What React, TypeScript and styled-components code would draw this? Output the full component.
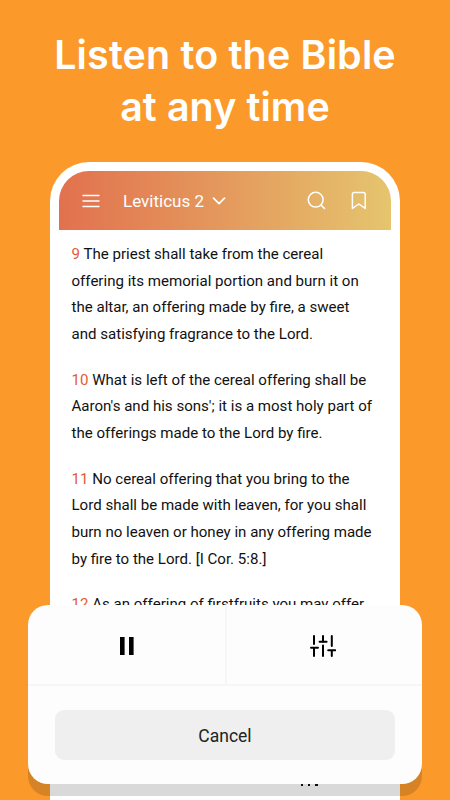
import React from "react";
import styled, { createGlobalStyle } from "styled-components";

const GlobalStyle = createGlobalStyle`
  * { box-sizing: border-box; }
  body { margin: 0; background: #fb9a2b; }
`;

const Page = styled.main`
  position: relative;
  width: 450px;
  height: 800px;
  overflow: hidden;
  background: #fb9a2b;
  font-family: Roboto, sans-serif;
  display: flex;
  flex-direction: column;
  align-items: center;
`;

const Title = styled.h1`
  margin: 0;
  height: 162px;
  flex: none;
  padding-top: 29px;
  color: #fff;
  font: 600 39.4px/52px Inter, sans-serif;
  text-align: center;
`;

const TitleLine = styled.span<{ $spacing: number }>`
  display: block;
  white-space: nowrap;
  letter-spacing: ${(p) => p.$spacing}px;
`;

const Phone = styled.section`
  width: 350px;
  height: 700px;
  flex: none;
  padding: 9px 9px 0;
  background: #fff;
  border-radius: 39px 39px 0 0;
`;

const TopBar = styled.header`
  height: 59px;
  padding: 0 24px 0 23px;
  display: flex;
  align-items: center;
  color: #fff;
  border-radius: 30px 30px 0 0;
  background: linear-gradient(90deg, #e2714f, #e4985c 48%, #e5c56e);
`;

const Chapter = styled.div`
  display: flex;
  align-items: center;
  gap: 8px;
  margin-left: 23px;
  padding-top: 1px;
  font-size: 17px;
  line-height: 20px;
  white-space: nowrap;
`;

const Actions = styled.div`
  display: flex;
  gap: 25px;
  margin-left: auto;
`;

const Verses = styled.div`
  padding: 11.3px 0 0 12.5px;
  display: flex;
  flex-direction: column;
  gap: 19.4px;
`;

const Verse = styled.p`
  margin: 0;
  color: #111;
  font-size: 15.07px;
  line-height: 26.55px;
`;

const Line = styled.span`
  display: block;
  white-space: nowrap;
`;

const VerseNumber = styled.span`
  color: #e05c35;
`;

const FooterMark = styled.div`
  display: flex;
  gap: 5px;
  margin: 165.5px 0 0 241.5px;
  i {
    width: 2.4px;
    height: 2px;
    background: #111;
  }
`;

const Sheet = styled.section`
  position: absolute;
  left: 28px;
  top: 605px;
  width: 394px;
  height: 179px;
  border-radius: 20px;
  background: #fdfdfd;
  box-shadow: 0 12px 0 rgba(0, 0, 0, 0.15);
`;

const Controls = styled.div`
  display: grid;
  grid-template-columns: 197px 1fr;
  height: 81px;
  border-bottom: 2px solid #f6f6f6;
`;

const Control = styled.button`
  display: flex;
  align-items: center;
  justify-content: center;
  padding: 3px 0 0;
  border: 0;
  background: none;
  & + & {
    padding-right: 3px;
    border-left: 2px solid #f6f6f6;
  }
`;

const Cancel = styled.button`
  display: block;
  width: 340px;
  height: 50px;
  margin: 24px auto 0;
  padding: 1px 0 0;
  border: 0;
  border-radius: 9px;
  background: #efefef;
  color: #222;
  font: 400 17.5px/20px Roboto, sans-serif;
`;

const verses = [
  { n: 9, lines: ["The priest shall take from the cereal", "offering its memorial portion and burn it on", "the altar, an offering made by fire, a sweet", "and satisfying fragrance to the Lord."] },
  { n: 10, lines: ["What is left of the cereal offering shall be", "Aaron's and his sons'; it is a most holy part of", "the offerings made to the Lord by fire."] },
  { n: 11, lines: ["No cereal offering that you bring to the", "Lord shall be made with leaven, for you shall", "burn no leaven or honey in any offering made", "by fire to the Lord. [I Cor. 5:8.]"] },
  { n: 12, lines: ["As an offering of firstfruits you may offer"] },
];

export default function App() {
  return (
    <Page>
      <GlobalStyle />
      <Title>
        <TitleLine $spacing={0.18}>Listen to the Bible</TitleLine>
        <TitleLine $spacing={0.1}>at any time</TitleLine>
      </Title>
      <Phone>
        <TopBar>
          <svg width="18" height="14" viewBox="0 0 18 14" fill="none" stroke="currentColor" strokeWidth="1.4" strokeLinecap="round">
            <path d="M1 1.5h16M1 7h16M1 12.5h16" />
          </svg>
          <Chapter>
            Leviticus 2
            <svg width="14" height="8" viewBox="0 0 14 8" fill="none" stroke="currentColor" strokeWidth="1.7" strokeLinecap="round" strokeLinejoin="round">
              <path d="M1.5 1.2L7 6.7l5.5-5.5" />
            </svg>
          </Chapter>
          <Actions>
            <svg width="19" height="19" viewBox="0 0 19 19" fill="none" stroke="currentColor" strokeWidth="1.5" strokeLinecap="round">
              <circle cx="8.7" cy="8.7" r="7.4" />
              <path d="M14 14l3.5 3.5" />
            </svg>
            <svg width="16" height="19" viewBox="0 0 16 19" fill="none" stroke="currentColor" strokeWidth="1.5" strokeLinejoin="round">
              <path d="M1.4 17.4V3a1.5 1.5 0 0 1 1.5-1.5h9.8A1.5 1.5 0 0 1 14.2 3v14.4L7.8 13z" />
            </svg>
          </Actions>
        </TopBar>
        <Verses>
          {verses.map((v) => (
            <Verse key={v.n}>
              {v.lines.map((text, i) => (
                <Line key={text}>
                  {i === 0 && <VerseNumber>{v.n} </VerseNumber>}
                  {text}
                </Line>
              ))}
            </Verse>
          ))}
        </Verses>
        <FooterMark><i /><i /><i /></FooterMark>
      </Phone>
      <Sheet>
        <Controls>
          <Control aria-label="Pause">
            <svg width="14" height="18" viewBox="0 0 14 18" fill="#000">
              <path d="M0 0h4.6v18H0zM9 0h4.6v18H9z" />
            </svg>
          </Control>
          <Control aria-label="Audio settings">
            <svg width="26" height="22" viewBox="0 0 26 22" fill="none" stroke="#000" strokeWidth="2" strokeLinecap="round">
              <path d="M4 1v8M1 12.7h7M4 13v8M13 1v6M9.6 6.8h7M13 10.5V21M21.8 1v10M18.2 15.2h7M21.8 16v5" />
            </svg>
          </Control>
        </Controls>
        <Cancel>Cancel</Cancel>
      </Sheet>
    </Page>
  );
}
